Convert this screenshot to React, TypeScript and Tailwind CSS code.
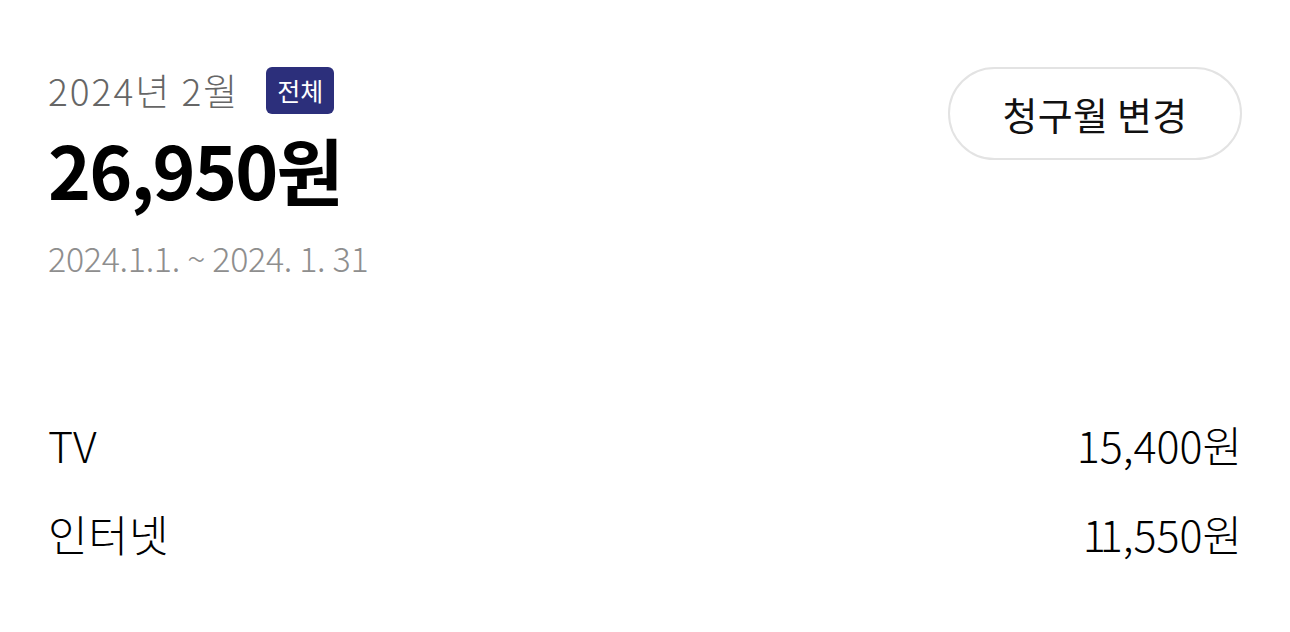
import React from "react";

export default function App() {
  return (
    <div className="w-[1290px] h-[632px] bg-white px-12 pt-[67px] font-['Noto_Sans_CJK_KR',sans-serif] text-black">
      <div className="flex justify-between items-start">
        <div>
          <div className="flex items-center h-[47px]">
            <span className="text-[37px] leading-none text-[#666666] tracking-[2px] font-light">2024년 2월</span>
            <span className="ml-[27px] h-[47px] w-[68px] rounded-[6px] bg-[#2c2f7b] text-white text-[25px] leading-none flex items-center justify-center">전체</span>
          </div>
          <div className="mt-[18px] h-[72px] flex items-center text-[73px] leading-none font-bold tracking-[-1.75px]">26,950원</div>
          <div className="mt-[34px] h-[40px] flex items-center text-[34px] leading-none text-[#8e8e8e] tracking-[-0.3px] font-light">2024.1.1. ~ 2024. 1. 31</div>
        </div>
        <button className="w-[294px] h-[93px] rounded-full border-2 border-[#e3e3e3] bg-white text-[38px] leading-none text-[#111] tracking-[0.3px] flex items-center justify-center">
          청구월 변경
        </button>
      </div>
      <div className="mt-[122px]">
        <div className="h-[89px] flex items-center justify-between text-[43px] leading-none font-light">
          <span>TV</span>
          <span>15,400원</span>
        </div>
        <div className="h-[89px] flex items-center justify-between text-[43px] leading-none font-light">
          <span className="tracking-[1px]">인터넷</span>
          <span>
            <span className="tracking-[-6px]">11</span>
            <span className="ml-[6px]">,550원</span>
          </span>
        </div>
      </div>
    </div>
  );
}
